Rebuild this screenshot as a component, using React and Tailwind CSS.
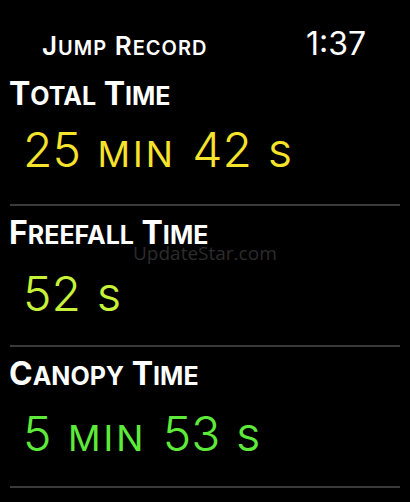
import React from "react";

const font = { fontFamily: "Inter, 'Noto Sans', sans-serif" };

function Caps({ words, small }) {
    // fake small caps: first letter large, rest upper case at a smaller size
    return (
        <>
            {words.map((w, i) => (
                <span key={i}>
                    {i > 0 && " "}
                    {w[0]}
                    <span className={`leading-none ${small}`}>{w.slice(1).toUpperCase()}</span>
                </span>
            ))}
        </>
    );
}

function Value({ parts, color }) {
    return (
        <div className={`pl-[23px] text-[48px] leading-[48px] font-light [word-spacing:3px] ${color}`}>
            {parts.map((p, i) => (
                <span key={i}>
                    {i > 0 && " "}
                    {p.unit ? (
                        <span className="text-[36px] leading-none font-normal tracking-[3px]">{p.text}</span>
                    ) : (
                        p.text
                    )}
                </span>
            ))}
        </div>
    );
}

function Label({ words }) {
    return (
        <div className="pl-[9px] text-[32px] font-bold leading-[32px] text-white">
            <Caps words={words} small="text-[25px]" />
        </div>
    );
}

export default function App() {
    return (
        <div className="relative h-[502px] w-[410px] overflow-hidden bg-black" style={font}>
            <div className="flex items-baseline justify-between pt-[28px] pl-[42px] pr-[44px]">
                <div className="text-[26px] font-semibold leading-[26px] tracking-[1px] text-white">
                    <Caps words={["Jump", "Record"]} small="text-[20px]" />
                </div>
                <div className="text-[32px] leading-[32px] text-white">1:37</div>
            </div>

            <div className="mt-[18px]">
                <Label words={["Total", "Time"]} />
            </div>
            <div className="mt-[16px]">
                <Value
                    color="text-[#f7e22c]"
                    parts={[{ text: "25" }, { text: "MIN", unit: true }, { text: "42" }, { text: "S", unit: true }]}
                />
            </div>
            <div className="mx-[10px] mt-[30px] h-[2px] bg-[#3a3a3a]" />

            <div className="mt-[11px]">
                <Label words={["Freefall", "Time"]} />
            </div>
            <div className="mt-[21px]">
                <Value color="text-[#c6f23a]" parts={[{ text: "52" }, { text: "S", unit: true }]} />
            </div>
            <div className="mx-[10px] mt-[27px] h-[2px] bg-[#3a3a3a]" />

            <div className="mt-[11px]">
                <Label words={["Canopy", "Time"]} />
            </div>
            <div className="mt-[20px]">
                <Value
                    color="text-[#5eea3a]"
                    parts={[{ text: "5" }, { text: "MIN", unit: true }, { text: "53" }, { text: "S", unit: true }]}
                />
            </div>
            <div className="mx-[10px] mt-[28px] h-[2px] bg-[#3a3a3a]" />

            <div
                className="absolute left-[133px] top-[242px] text-[19px] leading-[22px] text-[#2c2c2c]"
                style={{ fontFamily: "'Open Sans', sans-serif" }}
            >
                UpdateStar.com
            </div>
        </div>
    );
}
